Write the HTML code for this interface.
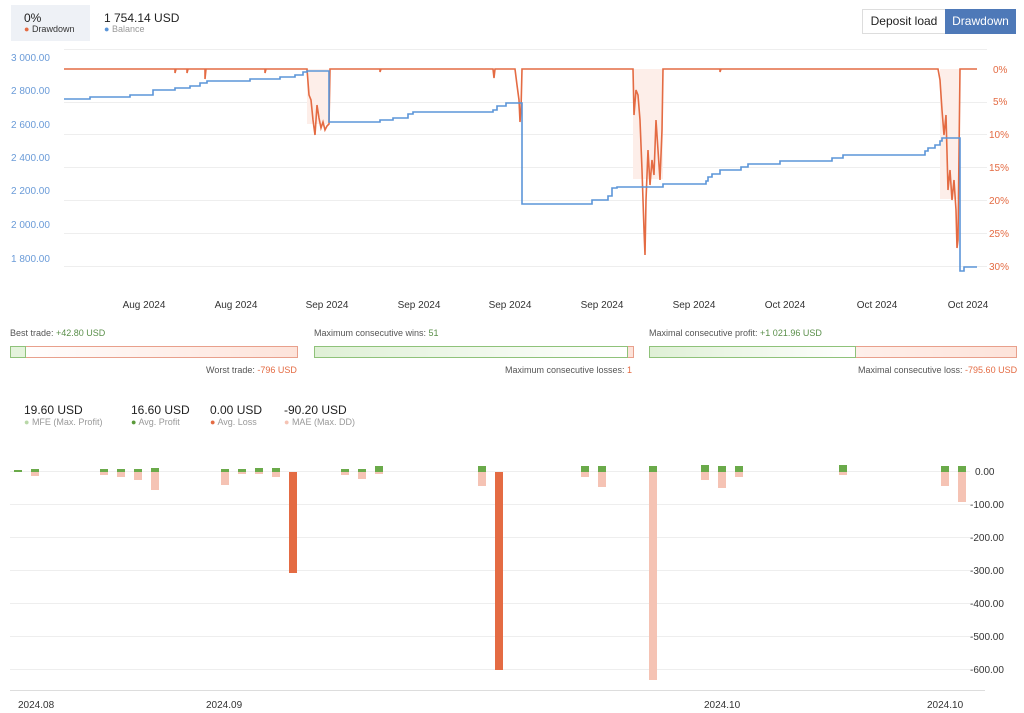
<!DOCTYPE html>
<html><head><meta charset="utf-8"><style>
body{margin:0;width:1024px;height:713px;background:#fff;font-family:"Liberation Sans",sans-serif;position:relative;overflow:hidden}
.a{position:absolute;white-space:nowrap}
.s{font-size:9px;color:#555}
</style></head><body>
<div class="a" style="left:11px;top:5px;width:79px;height:36px;background:#eef1f6"></div>
<div class="a" style="left:24px;top:11px;font-size:12px;color:#222">0%</div>
<div class="a s" style="left:24px;top:24px;color:#333"><span style="color:#e46b43">●</span> Drawdown</div>
<div class="a" style="left:104px;top:11px;font-size:12px;color:#222">1 754.14 USD</div>
<div class="a s" style="left:104px;top:24px;color:#999"><span style="color:#5b95d8">●</span> Balance</div>
<div class="a" style="left:862px;top:9px;width:82px;height:23px;border:1px solid #ddd;font-size:12px;line-height:23px;text-align:center;color:#222">Deposit load</div>
<div class="a" style="left:945px;top:9px;width:71px;height:25px;background:#4e79b8;font-size:12px;line-height:25px;text-align:center;color:#fff">Drawdown</div>

<svg class="a" style="left:0;top:0" width="1024" height="713">
<g stroke="#eee" stroke-width="1">
<line x1="64" y1="49.5" x2="987" y2="49.5"/><line x1="64" y1="102.5" x2="987" y2="102.5"/><line x1="64" y1="134.5" x2="987" y2="134.5"/><line x1="64" y1="167.5" x2="987" y2="167.5"/><line x1="64" y1="200.5" x2="987" y2="200.5"/><line x1="64" y1="233.5" x2="987" y2="233.5"/><line x1="64" y1="266.5" x2="987" y2="266.5"/>
<line x1="10" y1="471.5" x2="970" y2="471.5"/><line x1="10" y1="504.5" x2="970" y2="504.5"/><line x1="10" y1="537.5" x2="970" y2="537.5"/><line x1="10" y1="570.5" x2="970" y2="570.5"/><line x1="10" y1="603.5" x2="970" y2="603.5"/><line x1="10" y1="636.5" x2="970" y2="636.5"/><line x1="10" y1="669.5" x2="970" y2="669.5"/>
</g>
<line x1="10" y1="690.5" x2="985" y2="690.5" stroke="#ddd"/>
<g font-size="10" fill="#6a9bd8" font-family="Liberation Sans">
<text x="11" y="61">3 000.00</text><text x="11" y="94">2 800.00</text><text x="11" y="128">2 600.00</text><text x="11" y="161">2 400.00</text><text x="11" y="194">2 200.00</text><text x="11" y="228">2 000.00</text><text x="11" y="262">1 800.00</text>
</g>
<g font-size="10" fill="#e46b43" font-family="Liberation Sans">
<text x="993" y="73">0%</text><text x="993" y="105">5%</text><text x="989" y="138">10%</text><text x="989" y="171">15%</text><text x="989" y="204">20%</text><text x="989" y="237">25%</text><text x="989" y="270">30%</text>
</g>
<g font-size="10" fill="#333" font-family="Liberation Sans" text-anchor="middle">
<text x="144" y="308">Aug 2024</text><text x="236" y="308">Aug 2024</text><text x="327" y="308">Sep 2024</text><text x="419" y="308">Sep 2024</text><text x="510" y="308">Sep 2024</text><text x="602" y="308">Sep 2024</text><text x="694" y="308">Sep 2024</text><text x="785" y="308">Oct 2024</text><text x="877" y="308">Oct 2024</text><text x="968" y="308">Oct 2024</text>
</g>
<!-- drawdown fills -->
<g fill="#fdeee9">
<rect x="307" y="69" width="23" height="55"/><rect x="633" y="69" width="30" height="110"/><rect x="940" y="69" width="20" height="130"/>
</g>
<polyline fill="none" stroke="#e46b43" stroke-width="1.6" points="64,69 175,69 175,73 176,69 187,69 187,73 188,69 205,69 205,79 206,69 265,69 265,73 266,69 305,69 307,69 309,95 311,100 313,120 315,135 317,105 319,118 321,128 323,122 325,130 327,126 329,124 330,69 380,69 380,72 381,69 493,69 494,78 495,69 515,69 517,85 519,100 520,122 521,110 522,69 633,69 634,115 636,90 638,95 640,120 642,170 644,230 645,255 646,200 648,150 650,185 652,160 654,175 656,120 658,150 660,180 662,130 663,69 720,69 720,72 721,69 938,69 940,80 942,110 944,135 946,115 948,190 950,170 952,200 954,180 956,210 957,248 958,240 960,69 977,69"/>
<polyline fill="none" stroke="#5b95d8" stroke-width="1.6" points="64,99 90,99 90,97 130,97 130,95 153,95 153,90 175,90 175,88 190,88 190,86 200,86 200,83 207,83 207,81 250,81 250,79 280,79 280,77 295,77 295,75 303,75 303,72 307,72 307,71 329,71 329,122 380,122 380,120 393,120 393,118 408,118 408,114 413,114 413,112 493,112 493,110 497,110 497,106 506,106 506,103 522,103 522,204 592,204 592,200 608,200 608,196 612,196 612,188 617,188 617,187 663,187 663,184 706,184 706,181 708,181 708,177 712,177 712,174 720,174 720,170 741,170 741,167 748,167 748,164 780,164 780,161 832,161 832,158 843,158 843,155 925,155 925,151 928,151 928,148 935,148 935,145 940,145 940,141 942,141 942,138 960,138 960,271 964,271 964,267 977,267"/>
<!-- bottom axis labels -->
<g font-size="10" fill="#333" font-family="Liberation Sans">
<text x="975" y="475">0.00</text><text x="970" y="508">-100.00</text><text x="970" y="541">-200.00</text><text x="970" y="574">-300.00</text><text x="970" y="607">-400.00</text><text x="970" y="640">-500.00</text><text x="970" y="673">-600.00</text>
<text x="18" y="708">2024.08</text><text x="206" y="708">2024.09</text><text x="704" y="708">2024.10</text><text x="927" y="708">2024.10</text>
</g>
<g fill="#f5c3b4">
<rect x="31" y="472" width="8" height="4"/><rect x="100" y="472" width="8" height="3"/><rect x="117" y="472" width="8" height="5"/><rect x="134" y="472" width="8" height="8"/><rect x="151" y="472" width="8" height="18"/>
<rect x="221" y="472" width="8" height="13"/><rect x="238" y="472" width="8" height="2"/><rect x="255" y="472" width="8" height="2"/><rect x="272" y="472" width="8" height="5"/>
<rect x="341" y="472" width="8" height="3"/><rect x="358" y="472" width="8" height="7"/><rect x="375" y="472" width="8" height="2"/>
<rect x="478" y="472" width="8" height="14"/><rect x="581" y="472" width="8" height="5"/><rect x="598" y="472" width="8" height="15"/><rect x="649" y="472" width="8" height="208"/>
<rect x="701" y="472" width="8" height="8"/><rect x="718" y="472" width="8" height="16"/><rect x="735" y="472" width="8" height="5"/><rect x="839" y="472" width="8" height="3"/><rect x="941" y="472" width="8" height="14"/><rect x="958" y="472" width="8" height="30"/>
</g>
<g fill="#e46b43"><rect x="289" y="472" width="8" height="101"/><rect x="495" y="472" width="8" height="198"/></g>
<g fill="#6aaa4a">
<rect x="14" y="470" width="8" height="2"/><rect x="31" y="469" width="8" height="3"/><rect x="100" y="469" width="8" height="3"/><rect x="117" y="469" width="8" height="3"/><rect x="134" y="469" width="8" height="3"/><rect x="151" y="468" width="8" height="4"/>
<rect x="221" y="469" width="8" height="3"/><rect x="238" y="469" width="8" height="3"/><rect x="255" y="468" width="8" height="4"/><rect x="272" y="468" width="8" height="4"/>
<rect x="341" y="469" width="8" height="3"/><rect x="358" y="469" width="8" height="3"/><rect x="375" y="466" width="8" height="6"/>
<rect x="478" y="466" width="8" height="6"/><rect x="581" y="466" width="8" height="6"/><rect x="598" y="466" width="8" height="6"/><rect x="649" y="466" width="8" height="6"/>
<rect x="701" y="465" width="8" height="7"/><rect x="718" y="466" width="8" height="6"/><rect x="735" y="466" width="8" height="6"/><rect x="839" y="465" width="8" height="7"/><rect x="941" y="466" width="8" height="6"/><rect x="958" y="466" width="8" height="6"/>
</g>
</svg>

<div class="a s" style="left:10px;top:328px">Best trade: <span style="color:#5a8f4a">+42.80 USD</span></div>
<div class="a" style="left:10px;top:346px;width:286px;height:10px;border:1px solid #e8a08c;background:linear-gradient(90deg,#fff,#fde3da)"></div>
<div class="a" style="left:10px;top:346px;width:14px;height:10px;border:1px solid #8fc27a;background:#e4f3dc"></div>
<div class="a s" style="left:206px;top:365px">Worst trade: <span style="color:#e46b43">-796 USD</span></div>

<div class="a s" style="left:314px;top:328px">Maximum consecutive wins: <span style="color:#5a8f4a">51</span></div>
<div class="a" style="left:314px;top:346px;width:318px;height:10px;border:1px solid #e8a08c;background:#fde3da"></div>
<div class="a" style="left:314px;top:346px;width:312px;height:10px;border:1px solid #8fc27a;background:linear-gradient(90deg,#dff0d6,#fff)"></div>
<div class="a s" style="left:505px;top:365px">Maximum consecutive losses: <span style="color:#e46b43">1</span></div>

<div class="a s" style="left:649px;top:328px">Maximal consecutive profit: <span style="color:#5a8f4a">+1 021.96 USD</span></div>
<div class="a" style="left:649px;top:346px;width:366px;height:10px;border:1px solid #e8a08c;background:linear-gradient(90deg,#fff,#fde3da)"></div>
<div class="a" style="left:649px;top:346px;width:205px;height:10px;border:1px solid #8fc27a;background:linear-gradient(90deg,#dff0d6,#fff)"></div>
<div class="a s" style="left:858px;top:365px">Maximal consecutive loss: <span style="color:#e46b43">-795.60 USD</span></div>

<div class="a" style="left:24px;top:403px;font-size:12px;color:#222">19.60 USD</div>
<div class="a s" style="left:24px;top:417px;color:#999"><span style="color:#b9d8a8">●</span> MFE (Max. Profit)</div>
<div class="a" style="left:131px;top:403px;font-size:12px;color:#222">16.60 USD</div>
<div class="a s" style="left:131px;top:417px;color:#999"><span style="color:#5a9a3a">●</span> Avg. Profit</div>
<div class="a" style="left:210px;top:403px;font-size:12px;color:#222">0.00 USD</div>
<div class="a s" style="left:210px;top:417px;color:#999"><span style="color:#e46b43">●</span> Avg. Loss</div>
<div class="a" style="left:284px;top:403px;font-size:12px;color:#222">-90.20 USD</div>
<div class="a s" style="left:284px;top:417px;color:#999"><span style="color:#f5c3b4">●</span> MAE (Max. DD)</div>
</body></html>
